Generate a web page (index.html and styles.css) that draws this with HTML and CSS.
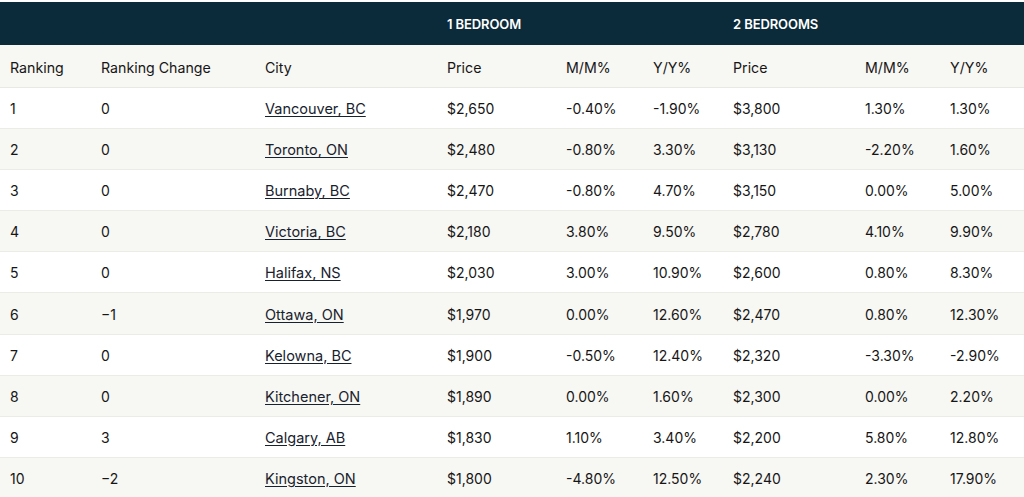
FILE: index.html
```html
<!DOCTYPE html>
<html lang="en">
<head>
<meta charset="utf-8">
<title>Rent Rankings</title>
<link rel="stylesheet" href="styles.css">
</head>
<body>
<table class="rent">
  <colgroup>
    <col class="c-rank"><col class="c-change"><col class="c-city">
    <col class="c-p1"><col class="c-m1"><col class="c-y1">
    <col class="c-p2"><col class="c-m2"><col class="c-y2">
  </colgroup>
  <thead>
    <tr class="group">
      <th></th><th></th><th></th>
      <th colspan="3">1 BEDROOM</th>
      <th colspan="3">2 BEDROOMS</th>
    </tr>
    <tr class="cols">
      <th>Ranking</th><th>Ranking Change</th><th>City</th>
      <th>Price</th><th>M/M%</th><th>Y/Y%</th>
      <th>Price</th><th>M/M%</th><th>Y/Y%</th>
    </tr>
  </thead>
  <tbody>
    <tr><td>1</td><td>0</td><td><a href="#">Vancouver, BC</a></td><td>$2,650</td><td>-0.40%</td><td>-1.90%</td><td>$3,800</td><td>1.30%</td><td>1.30%</td></tr>
    <tr><td>2</td><td>0</td><td><a href="#">Toronto, ON</a></td><td>$2,480</td><td>-0.80%</td><td>3.30%</td><td>$3,130</td><td>-2.20%</td><td>1.60%</td></tr>
    <tr><td>3</td><td>0</td><td><a href="#">Burnaby, BC</a></td><td>$2,470</td><td>-0.80%</td><td>4.70%</td><td>$3,150</td><td>0.00%</td><td>5.00%</td></tr>
    <tr><td>4</td><td>0</td><td><a href="#">Victoria, BC</a></td><td>$2,180</td><td>3.80%</td><td>9.50%</td><td>$2,780</td><td>4.10%</td><td>9.90%</td></tr>
    <tr><td>5</td><td>0</td><td><a href="#">Halifax, NS</a></td><td>$2,030</td><td>3.00%</td><td>10.90%</td><td>$2,600</td><td>0.80%</td><td>8.30%</td></tr>
    <tr><td>6</td><td>−1</td><td><a href="#">Ottawa, ON</a></td><td>$1,970</td><td>0.00%</td><td>12.60%</td><td>$2,470</td><td>0.80%</td><td>12.30%</td></tr>
    <tr><td>7</td><td>0</td><td><a href="#">Kelowna, BC</a></td><td>$1,900</td><td>-0.50%</td><td>12.40%</td><td>$2,320</td><td>-3.30%</td><td>-2.90%</td></tr>
    <tr><td>8</td><td>0</td><td><a href="#">Kitchener, ON</a></td><td>$1,890</td><td>0.00%</td><td>1.60%</td><td>$2,300</td><td>0.00%</td><td>2.20%</td></tr>
    <tr><td>9</td><td>3</td><td><a href="#">Calgary, AB</a></td><td>$1,830</td><td>1.10%</td><td>3.40%</td><td>$2,200</td><td>5.80%</td><td>12.80%</td></tr>
    <tr><td>10</td><td>−2</td><td><a href="#">Kingston, ON</a></td><td>$1,800</td><td>-4.80%</td><td>12.50%</td><td>$2,240</td><td>2.30%</td><td>17.90%</td></tr>
  </tbody>
</table>
</body>
</html>
```

FILE: styles.css
```css
html, body {
  margin: 0;
  padding: 0;
  background: #ffffff;
}
body {
  padding-top: 2px;
  font-family: Inter, "Liberation Sans", sans-serif;
  font-size: 14px;
  color: #161616;
}
.rent {
  width: 1024px;
  border-collapse: collapse;
  table-layout: fixed;
}
.c-rank { width: 91px; }
.c-change { width: 164px; }
.c-city { width: 182px; }
.c-p1 { width: 119px; }
.c-m1 { width: 87px; }
.c-y1 { width: 80px; }
.c-p2 { width: 132px; }
.c-m2 { width: 85px; }
.c-y2 { width: 84px; }

.rent th, .rent td {
  text-align: left;
  padding: 0 0 0 10px;
  white-space: nowrap;
  font-weight: 400;
}
.group th {
  background: #0b2a3a;
  color: #ffffff;
  height: 43px;
  font-size: 13px;
  font-weight: 600;
  letter-spacing: -0.1px;
}
.cols th {
  background: #f7f7f3;
  height: 40px;
  border-bottom: 1px solid #e9e9e4;
  font-size: 14.2px;
  padding-top: 2px;
}
.rent tbody td {
  height: 39.1px;
  border-bottom: 1px solid #ececE7;
  font-size: 14px;
  padding-top: 1px;
}
.rent tbody tr:nth-child(even) td {
  background: #f7f7f3;
}
.rent a {
  color: #18222e;
  text-decoration: underline;
  text-underline-offset: 2px;
  font-size: 14.5px;
}
```
